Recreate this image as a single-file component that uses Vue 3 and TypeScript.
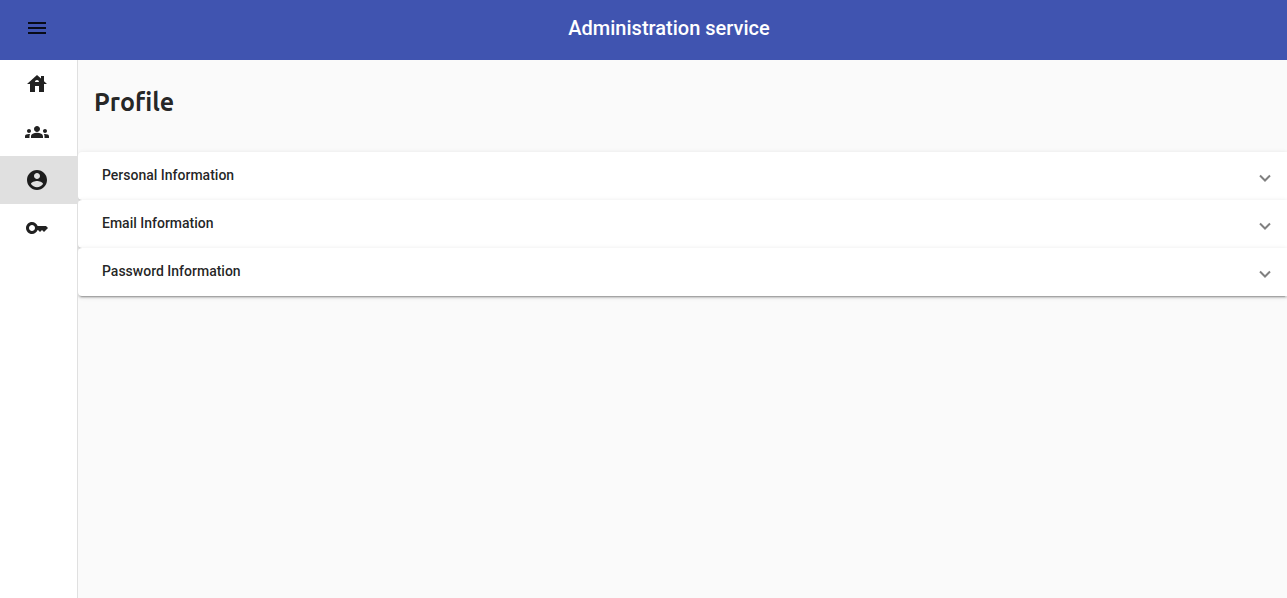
<script setup lang="ts">
import { ref } from 'vue'

interface NavItem {
  label: string
  path: string
}

const navItems: NavItem[] = [
  {
    label: 'Home',
    path: 'M19 9.3V4h-3v2.6L12 3 2 12h3v8h5v-6h4v6h5v-8h3l-3-2.7zm-9 .7c0-1.1.9-2 2-2s2 .9 2 2h-4z',
  },
  {
    label: 'Groups',
    path: 'M12 12.75c1.63 0 3.07.39 4.24.9 1.08.48 1.76 1.56 1.76 2.73V18H6v-1.61c0-1.18.68-2.26 1.76-2.73 1.17-.52 2.61-.91 4.24-.91zM4 13c1.1 0 2-.9 2-2s-.9-2-2-2-2 .9-2 2 .9 2 2 2zm1.13 1.1c-.37-.06-.74-.1-1.13-.1-.99 0-1.93.21-2.78.58C.48 14.9 0 15.62 0 16.43V18h4.5v-1.61c0-.83.23-1.61.63-2.29zM20 13c1.1 0 2-.9 2-2s-.9-2-2-2-2 .9-2 2 .9 2 2 2zm4 3.43c0-.81-.48-1.53-1.22-1.85-.85-.37-1.79-.58-2.78-.58-.39 0-.76.04-1.13.1.4.68.63 1.46.63 2.29V18H24v-1.57zM12 6c1.66 0 3 1.34 3 3s-1.34 3-3 3-3-1.34-3-3 1.34-3 3-3z',
  },
  {
    label: 'Profile',
    path: 'M12 2C6.48 2 2 6.48 2 12s4.48 10 10 10 10-4.48 10-10S17.52 2 12 2zm0 3c1.66 0 3 1.34 3 3s-1.34 3-3 3-3-1.34-3-3 1.34-3 3-3zm0 14.2c-2.5 0-4.71-1.28-6-3.22.03-1.99 4-3.08 6-3.08 1.99 0 5.97 1.09 6 3.08-1.29 1.94-3.5 3.22-6 3.22z',
  },
  {
    label: 'Keys',
    path: 'M21 10h-8.35C11.83 7.67 9.61 6 7 6c-3.31 0-6 2.69-6 6s2.69 6 6 6c2.61 0 4.83-1.67 5.65-4H13l2 2 2-2 2 2 4-4.04L21 10zM7 15c-1.65 0-3-1.35-3-3s1.35-3 3-3 3 1.35 3 3-1.35 3-3 3z',
  },
]

const active = ref('Profile')
const panels: string[] = ['Personal Information', 'Email Information', 'Password Information']
</script>

<template>
  <div class="app">
    <header class="toolbar">
      <button class="menu" type="button" aria-label="Menu">
        <svg class="icon" viewBox="0 0 24 24" aria-hidden="true">
          <path d="M3 18h18v-2H3v2zm0-5h18v-2H3v2zm0-7v2h18V6H3z" />
        </svg>
      </button>
      <span class="title">Administration service</span>
    </header>
    <div class="body">
      <nav class="sidebar">
        <a
          v-for="item in navItems"
          :key="item.label"
          href="#"
          class="nav-item"
          :class="{ active: item.label === active }"
          :aria-label="item.label"
          @click.prevent="active = item.label"
        >
          <svg class="icon" viewBox="0 0 24 24" aria-hidden="true"><path :d="item.path" /></svg>
        </a>
      </nav>
      <main class="content">
        <h1>Profile</h1>
        <div class="accordion">
          <button v-for="panel in panels" :key="panel" type="button" class="panel" aria-expanded="false">
            <span>{{ panel }}</span>
            <svg class="chevron" viewBox="0 0 12 8" aria-hidden="true"><path d="M1 1.5l5 5 5-5" /></svg>
          </button>
        </div>
      </main>
    </div>
  </div>
</template>

<style>
body {
  margin: 0;
  background: #fafafa;
}
</style>

<style scoped>
.app {
  display: flex;
  flex-direction: column;
  min-height: 100vh;
  font-family: Roboto, "Liberation Sans", sans-serif;
  color: rgba(0, 0, 0, 0.87);
}

.toolbar {
  display: flex;
  align-items: center;
  height: 60px;
  box-sizing: border-box;
  padding: 0 0 4px 17px;
  background: #4054b0;
}

.menu {
  display: flex;
  padding: 8px;
  border: 0;
  background: none;
  color: rgba(0, 0, 0, 0.87);
  cursor: pointer;
}

.icon {
  display: block;
  width: 24px;
  height: 24px;
  fill: currentColor;
}

.title {
  flex: 1;
  padding-right: 6px;
  text-align: center;
  font-size: 20px;
  line-height: 32px;
  font-weight: 500;
  color: #fff;
}

.body {
  flex: 1;
  display: flex;
}

.sidebar {
  flex: none;
  width: 77px;
  background: #fff;
  border-right: 1px solid #e0e0e0;
}

.nav-item {
  display: flex;
  align-items: center;
  height: 48px;
  padding-left: 25px;
  color: rgba(0, 0, 0, 0.87);
}

.nav-item.active {
  background: #e0e0e0;
}

.content {
  flex: 1;
  min-width: 0;
  overflow: hidden;
}

h1 {
  margin: 0;
  padding: 26px 16px 34px;
  font-family: Ubuntu, "Noto Sans", sans-serif;
  font-size: 25px;
  line-height: 32px;
  font-weight: 700;
}

.accordion {
  display: flex;
  flex-direction: column;
}

.panel {
  display: flex;
  align-items: center;
  justify-content: space-between;
  height: 48px;
  padding: 0 16px 0 24px;
  border: 0;
  border-radius: 4px 0 0 4px;
  background: #fff;
  box-shadow: 0 3px 1px -2px rgba(0, 0, 0, 0.2), 0 2px 2px 0 rgba(0, 0, 0, 0.14), 0 1px 5px 0 rgba(0, 0, 0, 0.12);
  font-family: inherit;
  font-size: 14px;
  line-height: 20px;
  font-weight: 500;
  color: rgba(0, 0, 0, 0.87);
  text-align: left;
  cursor: pointer;
}

.panel span {
  padding-bottom: 2px;
}

.chevron {
  width: 12px;
  height: 8px;
  margin-top: 4px;
  overflow: visible;
  fill: none;
  stroke: #808080;
  stroke-width: 2;
}
</style>
